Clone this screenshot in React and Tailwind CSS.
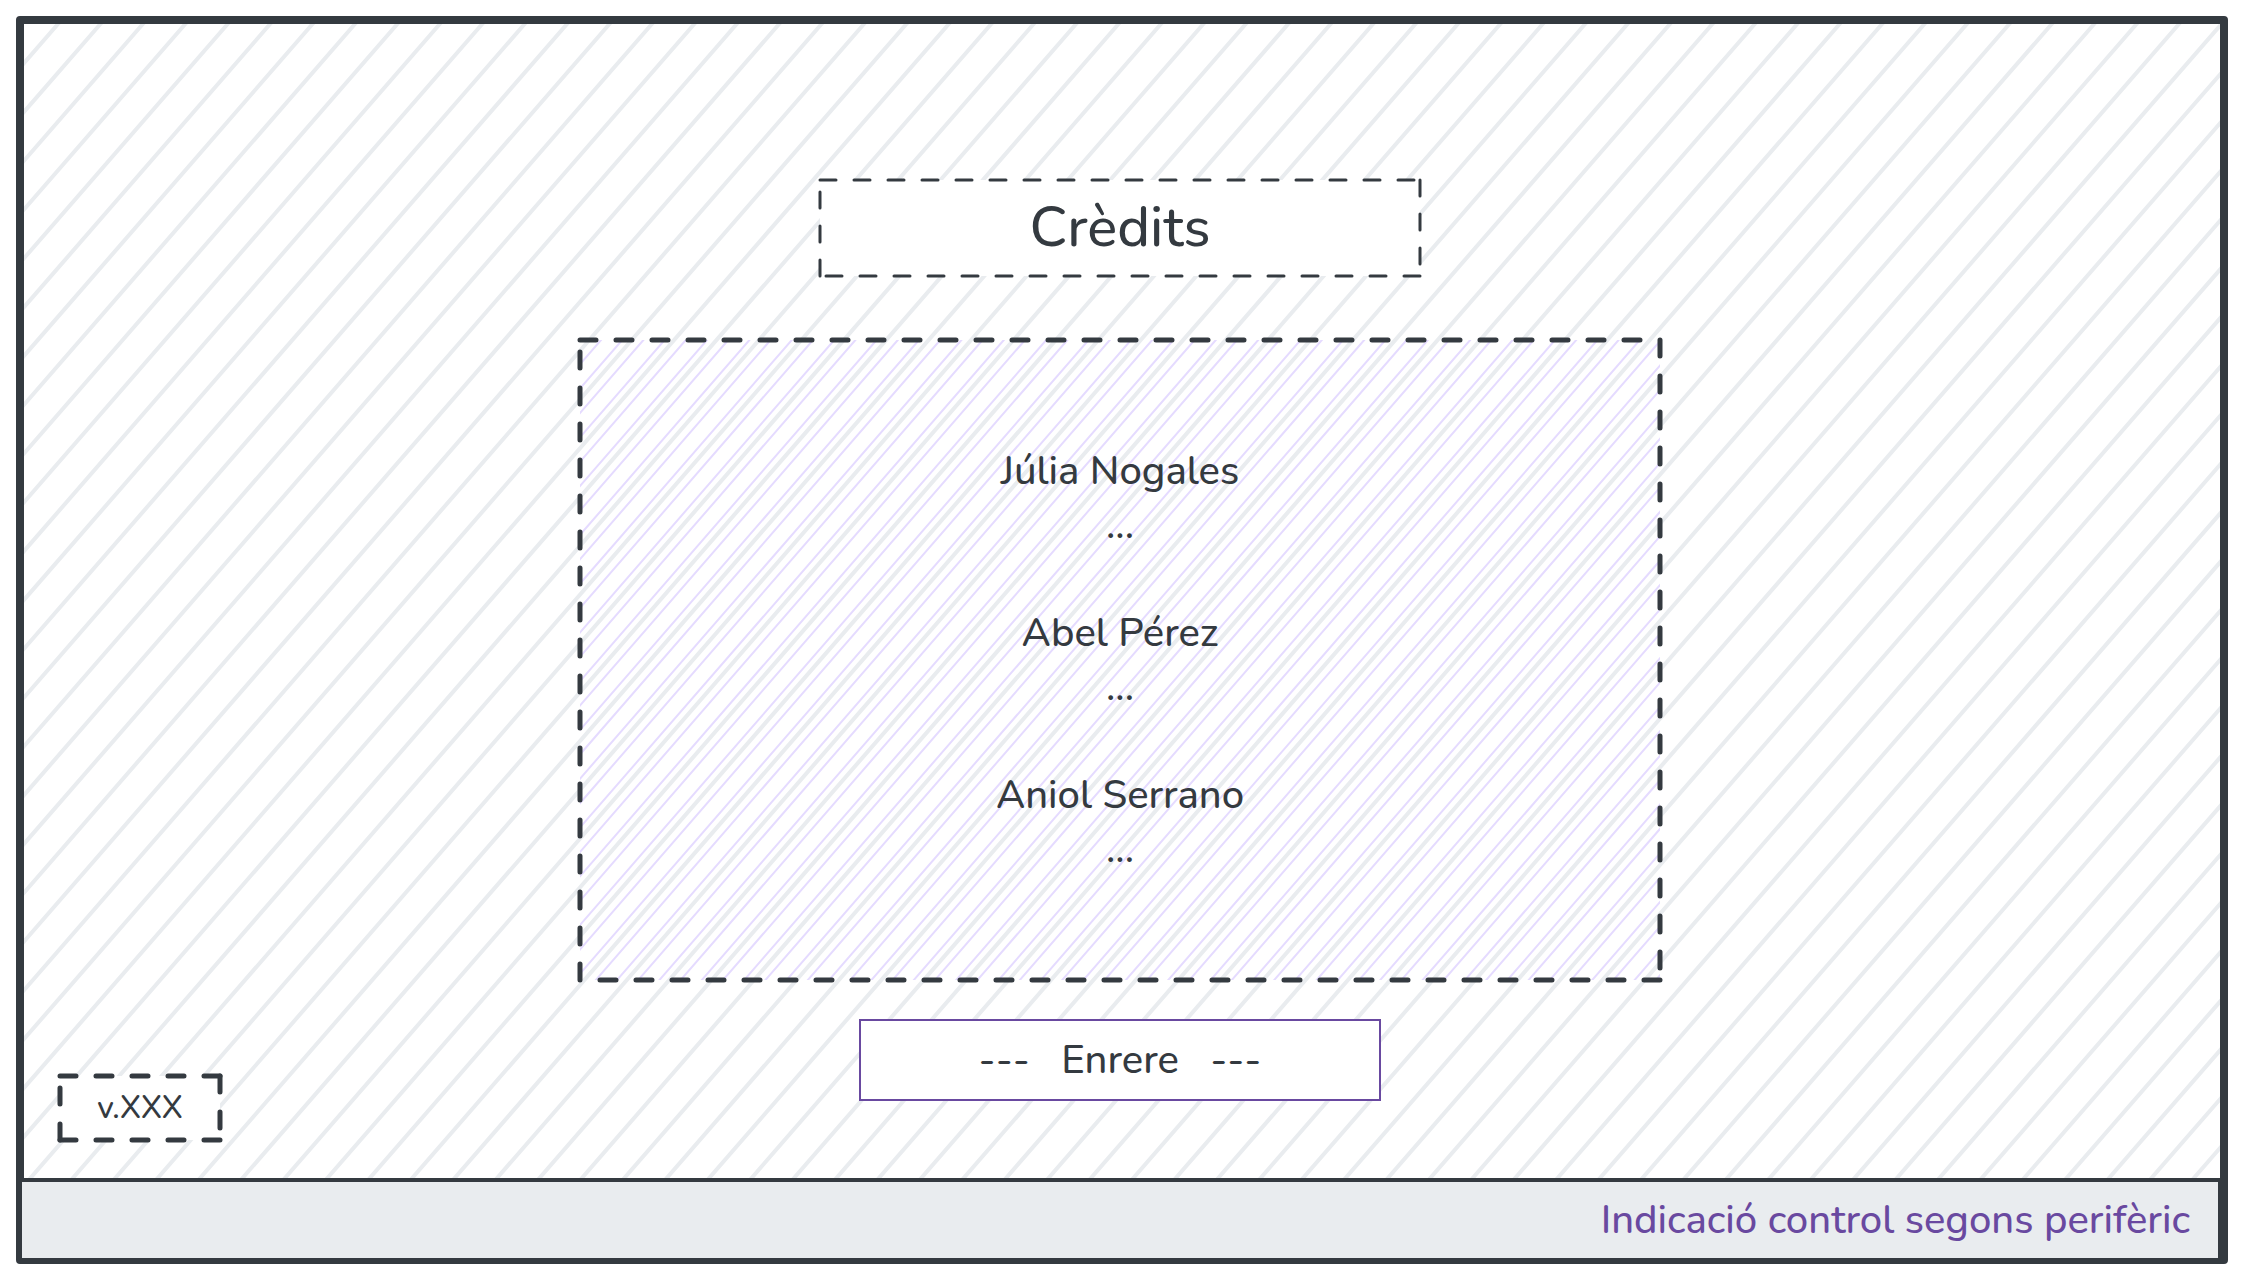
const SLOPE = 0.8693;

function Hatch({ count, start, step, thickness, color }) {
  const length = 3000;
  const lines = Array.from({ length: count }, (_, i) => {
    const x = start + i * step;
    return `M${x.toFixed(2)} 0L${(x - length * SLOPE).toFixed(2)} ${length}`;
  });
  return (
    <svg
      aria-hidden="true"
      className="pointer-events-none absolute inset-0 h-full w-full"
      fill="none"
      stroke={color}
      strokeWidth={thickness}
      strokeLinecap="square"
    >
      <path d={lines.join("")} />
    </svg>
  );
}

function DashedOutline({ thickness, dash }) {
  return (
    <svg
      aria-hidden="true"
      className="pointer-events-none absolute inset-0 h-full w-full overflow-visible"
      stroke="#343a40"
      strokeWidth={thickness}
      strokeDasharray={dash}
      strokeLinecap="round"
    >
      <line x1="0" y1="0" x2="100%" y2="0" />
      <line x1="100%" y1="0" x2="100%" y2="100%" />
      <line x1="100%" y1="100%" x2="0" y2="100%" />
      <line x1="0" y1="100%" x2="0" y2="0" />
    </svg>
  );
}

const credits = ["Júlia Nogales", "Abel Pérez", "Aniol Serrano"];

export default function App() {
  return (
    <div className="flex min-h-screen flex-col bg-white p-4 font-['Nunito','Lato',sans-serif] font-medium text-[#343a40]">
      <div className="flex grow flex-col rounded-sm border-8 border-[#343a40]">
        <main className="relative grid grow overflow-hidden">
          <Hatch count={115} start={34} step={42.42} thickness={4} color="#e9ecef" />

          <div className="relative flex flex-col items-center pt-39 pr-1 pb-19 [grid-area:1/1]">
            <header className="relative flex h-24 w-150 items-center justify-center bg-white">
              <DashedOutline thickness={3} dash="16 18" />
              <h1 className="text-[56px] leading-[76px] font-medium">Crèdits</h1>
            </header>

            <section
              aria-label="Crèdits"
              className="relative mt-16 flex h-160 w-270 items-center justify-center"
            >
              <div className="absolute inset-0 overflow-hidden">
                <Hatch count={80} start={21} step={21.2} thickness={2} color="#e5dbff" />
              </div>
              <DashedOutline thickness={5} dash="16 20" />
              <ul className="relative flex flex-col gap-[54px] text-center text-[40px] leading-[54px]">
                {credits.map((name) => (
                  <li key={name}>
                    <p>{name}</p>
                    <p>...</p>
                  </li>
                ))}
              </ul>
            </section>

            <button
              type="button"
              className="mt-[39px] h-[82px] w-[522px] border-2 border-[#6949a0] bg-white text-[40px] leading-[54px] font-medium whitespace-pre"
            >
              {"---   Enrere   ---"}
            </button>
          </div>

          <div className="relative mb-[38px] ml-9 flex h-16 w-40 items-center justify-center self-end bg-white [grid-area:1/1]">
            <DashedOutline thickness={5} dash="16 20" />
            <span className="text-[32px] leading-[44px]">v.XXX</span>
          </div>
        </main>

        <footer className="relative -mr-0.5 -mb-1.5 -ml-1.5 flex h-21 items-center justify-end border-4 border-[#343a40] bg-[#e9ecef] pr-7">
          <p className="text-[40px] leading-[54px] text-[#6949a0]">
            Indicació control segons perifèric
          </p>
        </footer>
      </div>
    </div>
  );
}
